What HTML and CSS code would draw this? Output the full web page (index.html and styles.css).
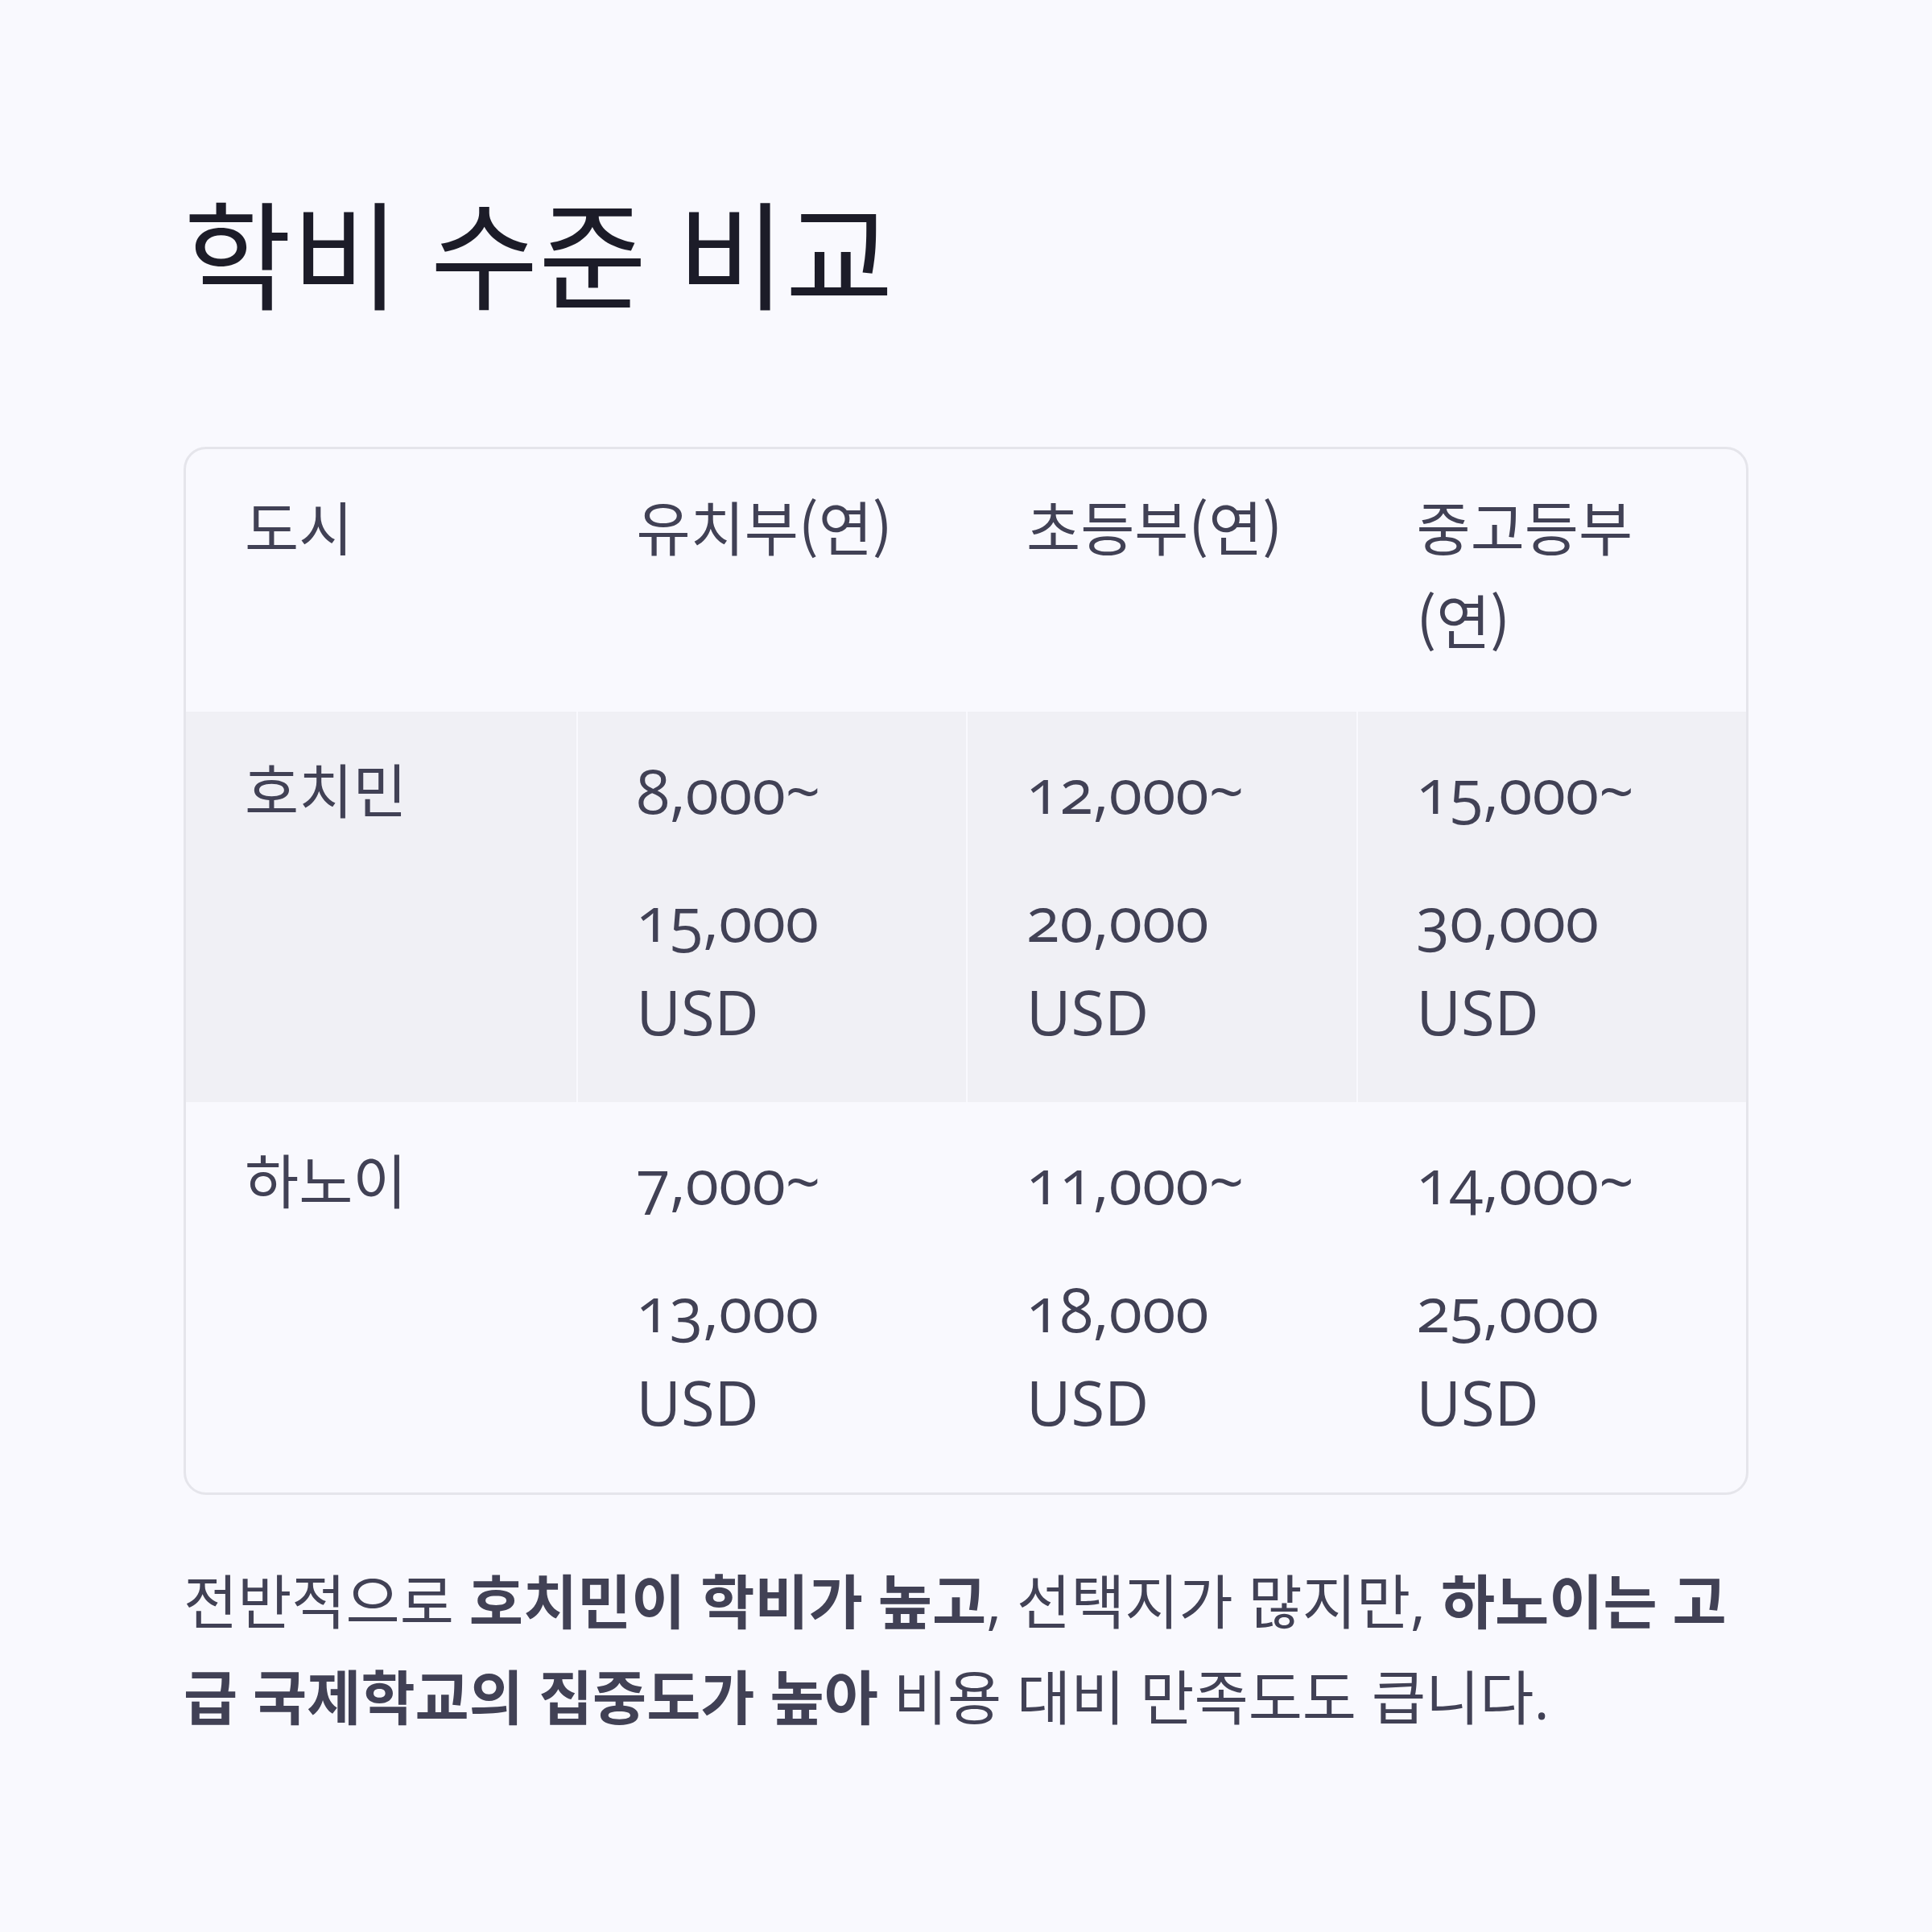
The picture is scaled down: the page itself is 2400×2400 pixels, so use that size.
FILE: index.html
```html
<!DOCTYPE html>
<html lang="ko">
<head>
<meta charset="utf-8">
<title>학비 수준 비교</title>
<link rel="stylesheet" href="styles.css">
</head>
<body>
<main class="page">
  <h1 class="title">학비 수준 비교</h1>
  <div class="table">
    <div class="row head">
      <div class="cell">도시</div>
      <div class="cell">유치부(연)</div>
      <div class="cell">초등부(연)</div>
      <div class="cell">중고등부(연)</div>
    </div>
    <div class="row alt">
      <div class="cell">호치민</div>
      <div class="cell"><span class="from">8,000~</span><span class="to">15,000 USD</span></div>
      <div class="cell"><span class="from">12,000~</span><span class="to">20,000 USD</span></div>
      <div class="cell"><span class="from">15,000~</span><span class="to">30,000 USD</span></div>
    </div>
    <div class="row">
      <div class="cell">하노이</div>
      <div class="cell"><span class="from">7,000~</span><span class="to">13,000 USD</span></div>
      <div class="cell"><span class="from">11,000~</span><span class="to">18,000 USD</span></div>
      <div class="cell"><span class="from">14,000~</span><span class="to">25,000 USD</span></div>
    </div>
  </div>
  <p class="note">전반적으로 <strong>호치민이 학비가 높고</strong>, 선택지가 많지만, <strong>하노이는 고급 국제학교의 집중도가 높아</strong> 비용 대비 만족도도 큽니다.</p>
</main>
</body>
</html>
```

FILE: styles.css
```css
html, body {
  margin: 0;
  padding: 0;
  background: #f9f9fe;
}

body {
  font-family: "Open Sans", "Noto Sans CJK KR", sans-serif;
  color: #414155;
}

.page {
  width: 1944px;
  padding: 229px 0 0 228px;
}

.title {
  margin: 0 0 151px;
  font-size: 146px;
  line-height: 1.2;
  font-weight: 400;
  color: #1c1c28;
}

.table {
  border: 3px solid #e5e5eb;
  border-radius: 28px;
  overflow: hidden;
  font-size: 73px;
  line-height: 116px;
  font-variant-numeric: oldstyle-nums;
}

.row {
  display: grid;
  grid-template-columns: repeat(4, 1fr);
}

.row.alt {
  background: #f0f0f5;
}

.cell {
  padding: 40px 73px 54px;
  border-left: 2px solid #f9f9fe;
}

.cell:first-child {
  border-left: 0;
}

.head .cell {
  padding-top: 36px;
  padding-bottom: 58px;
  font-family: "Noto Sans CJK KR", "Open Sans", sans-serif;
}

.from,
.to {
  display: block;
  font-size: 76px;
}

.to {
  margin-top: 43px;
}

.note {
  margin: 72px 0 0;
  font-size: 73px;
  line-height: 119px;
}

.note strong {
  font-weight: 700;
}
```
